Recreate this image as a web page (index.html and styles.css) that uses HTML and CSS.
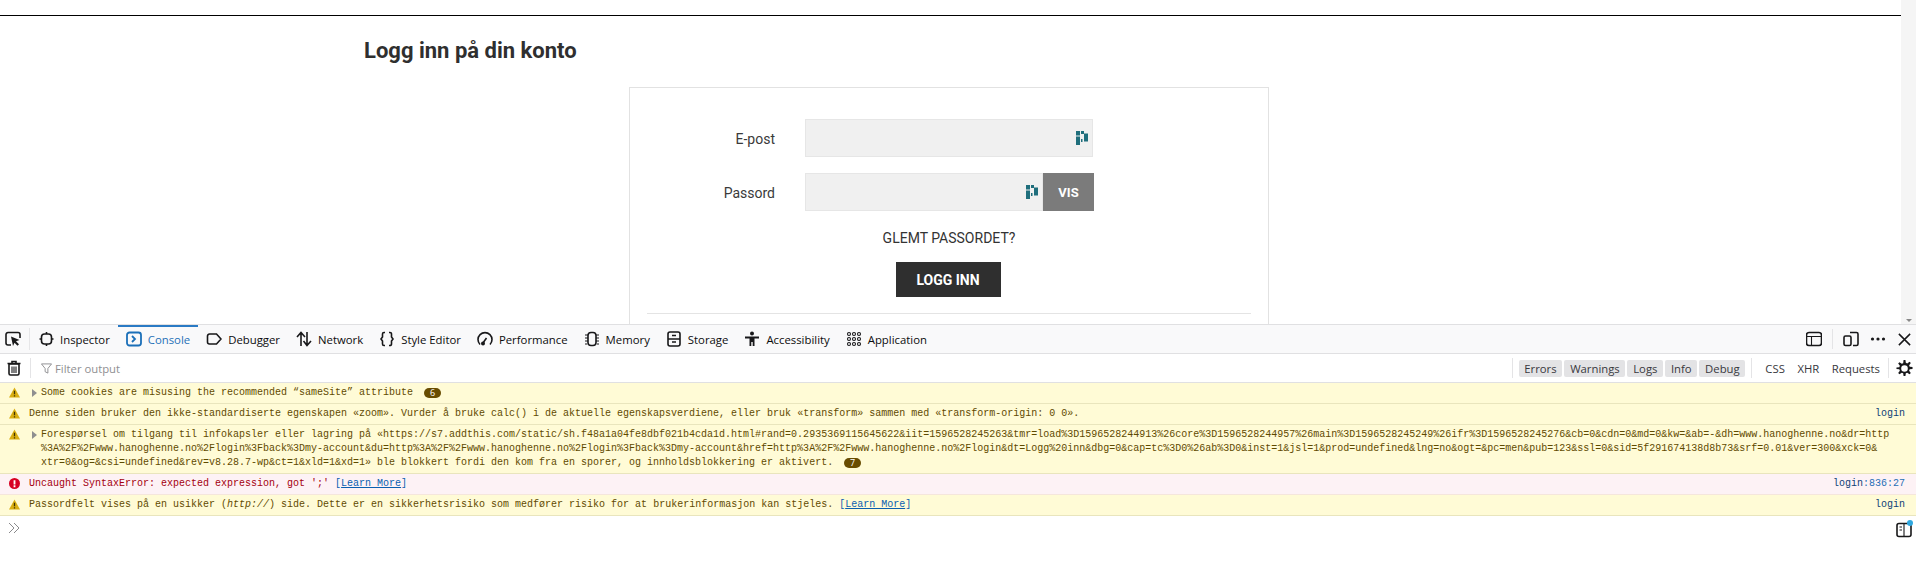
FILE: index.html
```html
<!DOCTYPE html>
<html lang="no">
<head>
<meta charset="utf-8">
<title>Logg inn</title>
<link rel="stylesheet" href="styles.css">
</head>
<body>
<section class="page">
  <main class="site">
    <h1 class="title">Logg inn på din konto</h1>
    <div class="card">
      <div class="row">
        <label class="label">E-post</label>
        <div class="field">
          <svg class="dash" viewBox="0 0 12 14"><path d="M0 0h4v4.500H0zM0 5.500h4V14H0zM5 0h3v3H5zM5 8h1.500v3H5zM8 2.500h4v8H8z"/></svg>
        </div>
      </div>
      <div class="row">
        <label class="label">Passord</label>
        <div class="field field-short">
          <svg class="dash" viewBox="0 0 12 14"><path d="M0 0h4v4.500H0zM0 5.500h4V14H0zM5 0h3v3H5zM5 8h1.500v3H5zM8 2.500h4v8H8z"/></svg>
        </div>
        <button class="vis">VIS</button>
      </div>
      <a class="forgot">GLEMT PASSORDET?</a>
      <button class="submit">LOGG INN</button>
      <hr class="rule">
    </div>
  </main>
  <div class="scrollbar"><span class="scroll-arrow"></span></div>
</section>

<section class="devtools">
  <nav class="tabbar">
    <span class="pick">
      <svg class="ico" viewBox="0 0 16 16"><path d="M6 14H3a2 2 0 0 1-2-2V3.500a2 2 0 0 1 2-2h10a2 2 0 0 1 2 2V7" class="ln"/><path d="M6 5.500l8.500 3.500-3.500 1.300 3 3-1.500 1.500-3-3L8 15z" class="fl"/></svg>
    </span>
    <span class="tab">
      <svg class="ico" viewBox="0 0 16 16"><rect x="3.500" y="3" width="10" height="10" rx="3" class="ln"/><path d="M8.500 1v2M8.500 13v2M1.500 8h2M13.500 8h2" class="ln"/></svg>Inspector
    </span>
    <span class="tab tab-on">
      <svg class="ico" viewBox="0 0 16 16"><rect x="1" y="1.500" width="14" height="13" rx="2.500" class="ln-blue"/><path d="M6 5l3 3-3 3" class="ln-blue"/></svg>Console
    </span>
    <span class="tab">
      <svg class="ico" viewBox="0 0 16 16"><path d="M3.500 3h7l4.500 5-4.500 5h-7A2 2 0 0 1 1.500 11V5a2 2 0 0 1 2-2z" class="ln"/></svg>Debugger
    </span>
    <span class="tab">
      <svg class="ico" viewBox="0 0 16 16"><path d="M5 15V2M1 6l4-4.500L9 6M11 1v13M7.500 10l3.500 4.500 4-4.500" class="ln"/></svg>Network
    </span>
    <span class="tab">
      <svg class="ico" viewBox="0 0 16 16"><path d="M6 1.500H5a1.500 1.500 0 0 0-1.500 1.500v3L2 8l1.500 2v3A1.500 1.500 0 0 0 5 14.500h1M10 1.500h1A1.500 1.500 0 0 1 12.500 3v3L14 8l-1.500 2v3a1.500 1.500 0 0 1-1.500 1.500h-1" class="ln"/></svg>Style Editor
    </span>
    <span class="tab">
      <svg class="ico" viewBox="0 0 16 16"><path d="M3 13.500A7 7 0 1 1 13 13.500" class="ln"/><path d="M6 12l3.500-5" class="ln"/><circle cx="6" cy="12.500" r="2" class="fl"/></svg>Performance
    </span>
    <span class="tab">
      <svg class="ico" viewBox="0 0 16 16"><rect x="4" y="1.500" width="8" height="13" rx="3" class="ln"/><path d="M1 4h3M1 7h3M1 10h3M1 13h2M12 4h3M12 7h3M12 10h3M13 13h2" class="ln-thin"/></svg>Memory
    </span>
    <span class="tab">
      <svg class="ico" viewBox="0 0 16 16"><rect x="2" y="1" width="12" height="14" rx="2" class="ln"/><path d="M2 8h12M6 4.500h4M6 11h4" class="ln"/></svg>Storage
    </span>
    <span class="tab">
      <svg class="ico" viewBox="0 0 16 16"><circle cx="8" cy="2.500" r="2" class="fl"/><path d="M1 5.500h14v2h-4.500V15H8.700v-4H7.300v4H5.500V7.500H1z" class="fl"/></svg>Accessibility
    </span>
    <span class="tab">
      <svg class="ico" viewBox="0 0 16 16"><g class="ln-thin"><circle cx="3" cy="3" r="1.500"/><circle cx="8" cy="3" r="1.500"/><circle cx="13" cy="3" r="1.500"/><circle cx="3" cy="8" r="1.500"/><circle cx="8" cy="8" r="1.500"/><circle cx="13" cy="8" r="1.500"/><circle cx="3" cy="13" r="1.500"/><circle cx="8" cy="13" r="1.500"/><circle cx="13" cy="13" r="1.500"/></g></svg>Application
    </span>
    <span class="tools">
      <svg class="ico" viewBox="0 0 16 16"><rect x="0.500" y="1.500" width="15" height="13" rx="2.500" class="ln"/><path d="M0.500 5.500h15M5.500 5.500v9" class="ln-thin"/></svg>
      <i class="sep sep-tool"></i>
      <svg class="ico" viewBox="0 0 16 16"><path d="M7 1.500h6.500a1.500 1.500 0 0 1 1.500 1.500v10a1.500 1.500 0 0 1-1.500 1.500H10" class="ln"/><rect x="1" y="5" width="7" height="9.500" rx="1.500" class="ln"/></svg>
      <svg class="ico ico-dots" viewBox="0 0 16 16"><circle cx="2.500" cy="8" r="1.600" class="fl"/><circle cx="8" cy="8" r="1.600" class="fl"/><circle cx="13.500" cy="8" r="1.600" class="fl"/></svg>
      <svg class="ico ico-x" viewBox="0 0 16 16"><path d="M2 2l12 12M14 2L2 14" class="ln"/></svg>
    </span>
  </nav>

  <div class="filterbar">
    <svg class="ico trash" viewBox="0 0 16 16"><path d="M1.500 3.500h13M6 3V1.500h4V3" class="ln"/><path d="M3 4h10v9.500a1.500 1.500 0 0 1-1.500 1.500h-7A1.500 1.500 0 0 1 3 13.500z" class="ln"/><path d="M6 6.500V13M8 6.500V13M10 6.500V13" class="ln-thin"/></svg>
    <i class="sep sep-trash"></i>
    <svg class="funnel" viewBox="0 0 12 12"><path d="M0.500 1h11L7.500 6v5l-3-1.500V6z"/></svg>
    <span class="filter-text">Filter output</span>
    <i class="sep sep-levels"></i>
    <span class="level">Errors</span>
    <span class="level">Warnings</span>
    <span class="level">Logs</span>
    <span class="level">Info</span>
    <span class="level">Debug</span>
    <i class="sep sep-net"></i>
    <span class="net net-css">CSS</span>
    <span class="net">XHR</span>
    <span class="net">Requests</span>
    <i class="sep sep-gear"></i>
    <svg class="gear" viewBox="0 0 18 18"><path d="M8 0h2l.4 3 1.500.6L14.300 1.800l1.400 1.400-1.800 2.400.6 1.500 3 .4v2l-3 .4-.6 1.500 1.800 2.400-1.400 1.400-2.400-1.800-1.500.6-.4 3H8l-.4-3-1.500-.6-2.400 1.800-1.400-1.400 1.800-2.400-.6-1.500-3-.4V8l3-.4.6-1.500-1.800-2.400 1.400-1.400 2.400 1.800 1.500-.6zM9 5.500a3.500 3.500 0 1 0 0 7 3.500 3.500 0 0 0 0-7z" fill-rule="evenodd"/></svg>
  </div>

  <div class="messages">
    <div class="msg warn">
      <svg class="level-ico" viewBox="0 0 12 12"><path d="M6 .5l6 11H0z" class="tri"/><path d="M5.300 4h1.400v4H5.300zM5.300 9h1.400v1.400H5.300z" class="bang"/></svg>
      <span class="arrow"></span>
      <span class="text">Some cookies are misusing the recommended “sameSite” attribute<b class="badge">6</b></span>
    </div>
    <div class="msg warn">
      <svg class="level-ico" viewBox="0 0 12 12"><path d="M6 .5l6 11H0z" class="tri"/><path d="M5.300 4h1.400v4H5.300zM5.300 9h1.400v1.400H5.300z" class="bang"/></svg>
      <span class="text">Denne siden bruker den ikke-standardiserte egenskapen «zoom». Vurder å bruke calc() i de aktuelle egenskapsverdiene, eller bruk «transform» sammen med «transform-origin: 0 0».</span>
      <span class="source">login</span>
    </div>
    <div class="msg warn">
      <svg class="level-ico" viewBox="0 0 12 12"><path d="M6 .5l6 11H0z" class="tri"/><path d="M5.300 4h1.400v4H5.300zM5.300 9h1.400v1.400H5.300z" class="bang"/></svg>
      <span class="arrow"></span>
      <span class="text">Forespørsel om tilgang til infokapsler eller lagring på «https://s7.addthis.com/static/sh.f48a1a04fe8dbf021b4cda1d.html#rand=0.2935369115645622&amp;iit=1596528245263&amp;tmr=load%3D1596528244913%26core%3D1596528244957%26main%3D1596528245249%26ifr%3D1596528245276&amp;cb=0&amp;cdn=0&amp;md=0&amp;kw=&amp;ab=-&amp;dh=www.hanoghenne.no&amp;dr=http<br>%3A%2F%2Fwww.hanoghenne.no%2Flogin%3Fback%3Dmy-account&amp;du=http%3A%2F%2Fwww.hanoghenne.no%2Flogin%3Fback%3Dmy-account&amp;href=http%3A%2F%2Fwww.hanoghenne.no%2Flogin&amp;dt=Logg%20inn&amp;dbg=0&amp;cap=tc%3D0%26ab%3D0&amp;inst=1&amp;jsl=1&amp;prod=undefined&amp;lng=no&amp;ogt=&amp;pc=men&amp;pub=123&amp;ssl=0&amp;sid=5f291674138d8b73&amp;srf=0.01&amp;ver=300&amp;xck=0&amp;<br>xtr=0&amp;og=&amp;csi=undefined&amp;rev=v8.28.7-wp&amp;ct=1&amp;xld=1&amp;xd=1» ble blokkert fordi den kom fra en sporer, og innholdsblokkering er aktivert.<b class="badge">7</b></span>
    </div>
    <div class="msg err">
      <svg class="level-ico" viewBox="0 0 12 12"><circle cx="6" cy="6" r="6" class="dot"/><path d="M5 2.500h2V7H5zM5 8h2v2H5z" class="wht"/></svg>
      <span class="text">Uncaught SyntaxError: expected expression, got ';' <a class="learn">[<u>Learn More</u>]</a></span>
      <span class="source">login<span class="pos">:836:27</span></span>
    </div>
    <div class="msg warn">
      <svg class="level-ico" viewBox="0 0 12 12"><path d="M6 .5l6 11H0z" class="tri"/><path d="M5.300 4h1.400v4H5.300zM5.300 9h1.400v1.400H5.300z" class="bang"/></svg>
      <span class="text">Passordfelt vises på en usikker (<em>http://</em>) side. Dette er en sikkerhetsrisiko som medfører risiko for at brukerinformasjon kan stjeles. <a class="learn">[<u>Learn More</u>]</a></span>
      <span class="source">login</span>
    </div>
  </div>

  <div class="prompt">
    <svg class="chev" viewBox="0 0 12 12"><path d="M1 1l5 5-5 5M6 1l5 5-5 5"/></svg>
    <span class="side">
      <svg class="ico" viewBox="0 0 16 16"><rect x="1" y="1.500" width="14" height="13" rx="2" class="ln"/><path d="M8 1.500v13M3.500 5h2.500M3.500 8h2.500" class="ln-thin"/></svg>
      <i class="side-dot"></i>
    </span>
  </div>
</section>
</body>
</html>
```
FILE: styles.css
```css
* { box-sizing: border-box; }
html, body { margin: 0; height: 576px; overflow: hidden; background: #fff; }
body { display: flex; flex-direction: column; }

/* page */
.page { height: 324px; display: flex; overflow: hidden; flex: none; }
.site { flex: 1; padding-top: 15px; font-family: Roboto, sans-serif; color: #333; }
.title {
  margin: 0; border-top: 1px solid #000; padding: 21px 0 0 364px;
  font-size: 22px; line-height: 28px; font-weight: 700; color: #2f2f2f;
}
.card {
  width: 640px; margin: 22px 0 0 629px; height: 300px; padding: 31px 17px 0;
  border: 1px solid #e2e2e2; display: flex; flex-direction: column; align-items: center;
}
.row { align-self: stretch; display: flex; align-items: center; margin-bottom: 16px; }
.label { width: 128px; margin-right: 30px; padding-top: 2px; text-align: right; font-size: 14px; font-weight: 400; color: #3a3a3a; }
.field { position: relative; width: 288px; height: 38px; background: #f0f0f0; border: 1px solid #e6e6e6; }
.field-short { width: 238px; }
.dash { position: absolute; right: 4px; top: 11px; width: 12px; height: 14px; fill: #1f6e7c; }
.vis {
  width: 51px; height: 38px; padding: 0; border: 0; background: #7b7b7b; color: #fff;
  font: 700 13px Roboto, sans-serif;
}
.forgot { padding-top: 1px; font-size: 14px; line-height: 20px; color: #333; }
.submit {
  width: 105px; height: 35px; margin: 14px 2px 0 0; padding: 0; border: 0; background: #2f2f2f; color: #fff;
  font: 700 14px Roboto, sans-serif;
}
.rule { align-self: stretch; margin: 16px 0 0; border: 0; border-top: 1px solid #e4e4e4; }
.scrollbar { width: 15px; background: #f5f5f5; display: flex; align-items: flex-end; justify-content: center; padding-bottom: 2px; }
.scroll-arrow { border: 3px solid transparent; border-top: 3px solid #888; border-bottom: 0; }

/* devtools */
.devtools { flex: 1; display: flex; flex-direction: column; font-family: "Open Sans", sans-serif; color: #0c0c0d; }
.tabbar {
  height: 30px; flex: none; display: flex; align-items: stretch; background: #f9f9fa;
  border-top: 1px solid #e0e0e2; border-bottom: 1px solid #e0e0e2; font-size: 11.35px;
}
.pick { width: 30px; display: flex; align-items: center; padding-left: 5px; border-right: 1px solid #e6e6e8; margin: 3px 0; }
.ico { width: 16px; height: 16px; flex: none; display: block; }
.tab { display: flex; align-items: center; gap: 6px; padding: 0 8px 2px; border-top: 2px solid transparent; white-space: nowrap; }
.tab-on { border-top-color: #2a7ac4; color: #1f71b8; }
.ln { fill: none; stroke: #18181a; stroke-width: 1.600; }
.ln-thin { fill: none; stroke: #18181a; stroke-width: 1.100; }
.ln-blue { fill: none; stroke: #1b6fb8; stroke-width: 1.800; }
.fl { fill: #18181a; }
.tools { margin-left: auto; display: flex; align-items: center; padding-right: 4px; }
.sep { display: block; flex: none; width: 1px; height: 20px; background: #e4e4e6; }
.sep-tool { margin: 0 10px; }
.ico-dots { margin-left: 11px; }
.ico-x { margin-left: 11px; width: 15px; height: 15px; }

.filterbar {
  height: 29px; flex: none; display: flex; align-items: center; background: #fff;
  border-bottom: 1px solid #e0e0e2; font-size: 11.3px; color: #38383d;
}
.trash { margin-left: 6px; }
.sep-trash { margin: 0 10px 0 8px; }
.funnel { width: 11px; height: 11px; margin-right: 3px; fill: none; stroke: #8a8a8c; stroke-width: 1; }
.filter-text { color: #8f8f92; }
.sep-levels { margin: 0 6px 0 auto; }
.level {
  height: 17px; padding: 0 5.750px; margin-right: 2px; background: #e3e3e5; border-radius: 2px;
  line-height: 17px; white-space: nowrap;
}
.sep-net { margin: 0 13px 0 4px; }
.net { margin-right: 12.500px; }
.sep-gear { margin: 0 7px 0 -4.500px; }
.gear { width: 17px; height: 17px; margin-right: 3px; fill: #18181a; }

.messages { font-family: "Liberation Mono", monospace; font-size: 10px; line-height: 14px; flex: none; }
.msg { display: flex; align-items: flex-start; padding: 3px 11px 3px 9px; border-bottom: 1px solid #e9e5bd; white-space: nowrap; }
.warn { background: #fffbd6; color: #5f4a00; }
.err { background: #fdf2f5; color: #a4000f; border-bottom-color: #f5e6dc; }
.level-ico { width: 11px; height: 11px; flex: none; margin: 1px 9px 0 0; }
.tri { fill: #d9ae12; }
.bang { fill: #3f3200; }
.dot { fill: #d70022; }
.wht { fill: #fff; }
.arrow { flex: none; width: 0; height: 0; margin: 3px 4px 0 3px; border: 4px solid transparent; border-left: 5px solid #8f8f8f; border-right: 0; }
.text { flex: none; }
.badge {
  display: inline-block; min-width: 17px; height: 10px; margin-left: 11px; padding: 0 4px; border-radius: 6px;
  background: #684c00; color: #fff; font: 400 9px/10px "Open Sans", sans-serif; text-align: center; vertical-align: -1px;
}
.learn { color: #0a5fb0; }
.source { margin-left: auto; color: #0f3f77; }
.pos { color: #1f6fb5; }

.prompt { flex: 1; display: flex; justify-content: space-between; padding: 6px 4px 0 8px; background: #fff; }
.chev { width: 12px; height: 12px; fill: none; stroke: #8a8a8c; stroke-width: 1; }
.side { position: relative; display: block; height: 16px; }
.side-dot { position: absolute; right: -1px; top: -2px; width: 6px; height: 6px; border-radius: 50%; background: #30a8e0; }
```
